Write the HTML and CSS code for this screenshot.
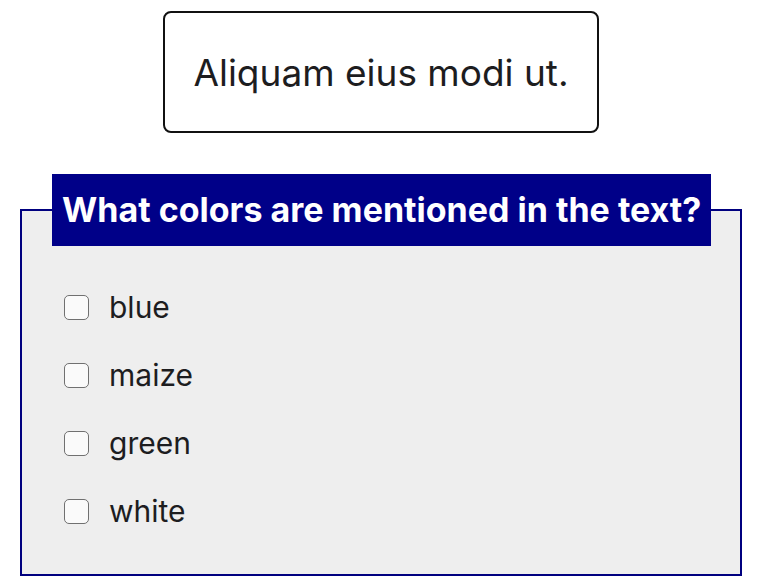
FILE: index.html
```html
<!DOCTYPE html>
<html lang="en">
<head>
<meta charset="utf-8">
<title>Quiz</title>
<link rel="stylesheet" href="styles.css">
</head>
<body>
<main class="page">
  <div class="prompt">Aliquam eius modi ut.</div>
  <fieldset class="question">
    <legend class="question-title">What colors are mentioned in the text?</legend>
    <div class="options">
      <label class="option"><input type="checkbox" class="check"><span>blue</span></label>
      <label class="option"><input type="checkbox" class="check"><span>maize</span></label>
      <label class="option"><input type="checkbox" class="check"><span>green</span></label>
      <label class="option"><input type="checkbox" class="check"><span>white</span></label>
    </div>
  </fieldset>
</main>
</body>
</html>
```
FILE: styles.css
```css
html, body {
  margin: 0;
  padding: 0;
  background: #ffffff;
}
body {
  font-family: Inter, "Liberation Sans", sans-serif;
  color: #1d1d1f;
}
.page {
  padding: 11px 20px 0;
  display: flex;
  flex-direction: column;
}
.prompt {
  align-self: center;
  box-sizing: border-box;
  width: 436px;
  height: 122px;
  border: 2px solid #111;
  border-radius: 8px;
  display: flex;
  align-items: center;
  justify-content: center;
  font-size: 37px;
  background: #fff;
}
.question {
  margin: 41px 0 0;
  padding: 0 30px;
  border: 2px solid #00007f;
  background: #eeeeee;
  min-width: 0;
}
.question-title {
  background: #000088;
  color: #fff;
  font-weight: 700;
  font-size: 34px;
  line-height: 72px;
  height: 72px;
  padding: 0 10px;
  letter-spacing: 0;
  white-space: nowrap;
}
.options {
  padding: 27px 0 29px 12px;
  display: flex;
  flex-direction: column;
}
.option {
  height: 68px;
  display: flex;
  align-items: center;
  gap: 20px;
  font-size: 30px;
}
.check {
  appearance: none;
  margin: 0;
  box-sizing: border-box;
  width: 25px;
  height: 25px;
  border: 1.5px solid #707070;
  border-radius: 5px;
  background: #fafafa;
}
```
